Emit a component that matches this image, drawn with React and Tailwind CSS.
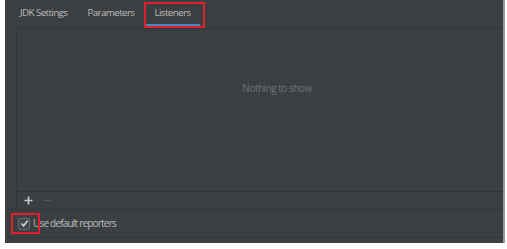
import React from 'react'

const TABS = ['JDK Settings', 'Parameters', 'Listeners']

export default function App() {
  return (
    <div className="w-[507px] h-[249px] bg-white" style={{ fontFamily: '"Open Sans", "Noto Sans", sans-serif' }}>
      <div className="ml-[5px] w-[500px] h-[243px] bg-[#3c3f41] border-r-2 border-[#9a9a9a] flex flex-col">
        {/* tabs */}
        <div className="h-[28px] flex items-stretch pl-[5px] shrink-0">
          {TABS.map((t) => {
            const active = t === 'Listeners'
            return (
              <div
                key={t}
                className="relative px-[10px] flex items-center text-[9.8px] tracking-[-0.6px] text-[#bbbbbb]"
              >
                <span className="-mt-[1px]">{t}</span>
                {active && (
                  <>
                    <div className="absolute left-[2px] right-[0px] bottom-[2px] h-[2px] bg-[#4a88c7]" />
                    <div className="absolute left-0 -right-[5px] top-[2px] bottom-0 border-2 border-[#e0202a]" />
                  </>
                )}
              </div>
            )
          })}
        </div>

        {/* table */}
        <div className="ml-[11px] h-[181px] flex flex-col border-l border-t border-[#333537] shrink-0">
          <div className="flex-1 flex items-center justify-center pl-[34px] pb-[44px] text-[10px] tracking-[-0.5px] text-[#6f7173]">
            Nothing to show
          </div>
          <div className="h-[18px] border-t border-[#333537] flex items-center pl-[7px] shrink-0">
            <svg width="9" height="9" viewBox="0 0 9 9">
              <path d="M4.5 0.5 V8.5 M0.5 4.5 H8.5" stroke="#c4c6c8" strokeWidth="1.6" />
            </svg>
            <svg className="ml-[10px]" width="9" height="9" viewBox="0 0 9 9">
              <path d="M0.5 4.5 H8.5" stroke="#55585a" strokeWidth="1.2" />
            </svg>
          </div>
        </div>

        {/* checkbox row */}
        <div className="h-[28px] border-t border-[#333537] flex items-center shrink-0 relative">
          <div className="ml-[13px] w-[12px] h-[12px] rounded-[2px] bg-[#43494a] border border-[#6b6b6b] flex items-center justify-center">
            <svg width="9" height="9" viewBox="0 0 9 9">
              <path d="M1.5 4.6 L3.6 6.8 L7.6 1.6" fill="none" stroke="#e0e0e0" strokeWidth="1.5" />
            </svg>
          </div>
          <span className="ml-[3px] text-[10px] tracking-[-0.8px] text-[#bbbbbb]">Use default reporters</span>
          <div className="absolute left-[6px] top-[3px] w-[29px] h-[21px] border-2 border-[#e0202a]" />
        </div>
        <div className="flex-1 border-t border-[#333537]" />
      </div>
    </div>
  )
}
